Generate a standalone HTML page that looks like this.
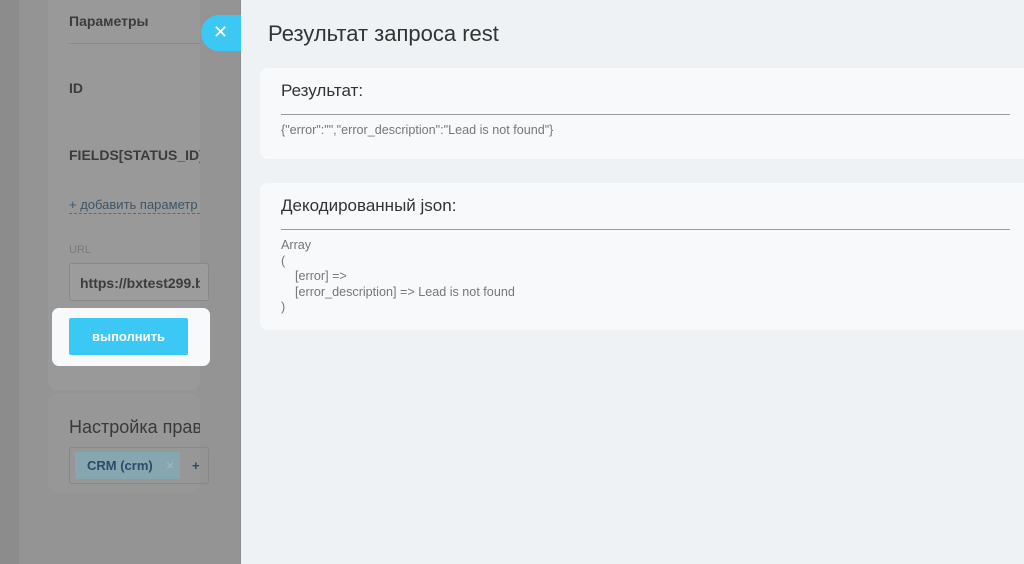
<!DOCTYPE html>
<html><head><meta charset="utf-8"><style>
*{margin:0;padding:0;box-sizing:border-box}
body{width:1024px;height:564px;overflow:hidden;position:relative;background:#8c8c8c;font-family:"Liberation Sans",sans-serif}
.l1{position:absolute;left:19px;top:0;width:221px;height:564px;background:#949494}
.card{position:absolute;left:48px;top:0;width:152px;height:390px;background:#999;border-radius:0 0 8px 8px}
.card2{position:absolute;left:48px;top:393px;width:152px;height:100px;background:#979797;border-radius:10px}
.t{position:absolute;color:#3c3c3c;font-weight:bold;font-size:14px;white-space:nowrap;overflow:hidden}
.right{position:absolute;left:241px;top:0;width:783px;height:564px;background:#eef2f5}
.box{position:absolute;left:19px;width:770px;background:#f8f9fb;border-radius:8px}
.h{position:absolute;left:21px;font-size:17px;color:#333}
.hr{position:absolute;left:21px;right:20px;height:1px;background:#9a9a9a}
.m{position:absolute;left:21px;font-size:12.6px;color:#777;line-height:15.5px}
</style></head><body>
<div class="l1"></div>
<div class="card"></div>
<div class="card2"></div>
<div class="t" style="left:69px;top:13px">Параметры</div>
<div style="position:absolute;left:69px;top:43px;width:131px;height:1px;background:#8a8a8a"></div>
<div class="t" style="left:69px;top:80px">ID</div>
<div class="t" style="left:69px;top:147px;width:131px">FIELDS[STATUS_ID]</div>
<div style="position:absolute;left:69px;top:197px;width:131px;overflow:hidden;white-space:nowrap;font-size:13px;color:#3f5566;border-bottom:1px dashed #5a6a77;height:17px">+ добавить параметр</div>
<div style="position:absolute;left:69px;top:244px;font-size:11px;color:#7a7a7a">URL</div>
<div style="position:absolute;left:69px;top:263px;width:140px;height:38px;border:1px solid #888;border-radius:3px;background:#9c9c9c"></div>
<div class="t" style="left:80px;top:275px;width:120px">https://bxtest299.bitrix24.ru</div>
<div style="position:absolute;left:52px;top:308px;width:158px;height:58px;background:#f8f9fb;border-radius:7px"></div>
<div style="position:absolute;left:69px;top:318px;width:119px;height:37px;background:#3bc8f5;border-radius:2px;color:#fff;font-weight:bold;font-size:13px;text-align:center;line-height:37px">выполнить</div>
<div style="position:absolute;left:69px;top:417px;font-size:18px;color:#3a3a3a;white-space:nowrap;width:131px;overflow:hidden">Настройка прав</div>
<div style="position:absolute;left:69px;top:447px;width:140px;height:37px;border:1px solid #888;border-radius:3px"></div>
<div style="position:absolute;left:75px;top:452px;width:105px;height:27px;background:#86a6b0;border-radius:2px;font-weight:bold;font-size:13px;color:#2d4a66;line-height:27px;padding-left:12px">CRM (crm) <span style="color:#9fb4bb;margin-left:10px">×</span></div>
<div style="position:absolute;left:192px;top:458px;color:#2d4a66;font-size:13px;font-weight:bold">+</div>
<div style="position:absolute;left:201px;top:15px;width:45px;height:36px;background:#3bc8f5;border-radius:18px 0 0 18px;color:#fff;font-size:18px;line-height:35px;padding-left:12px">✕</div>
<div class="right">
<div style="position:absolute;left:27px;top:21px;font-size:22px;color:#333">Результат запроса rest</div>
<div class="box" style="top:68px;height:91px">
<div class="h" style="top:13px">Результат:</div>
<div class="hr" style="top:46px"></div>
<div class="m" style="top:55px">{"error":"","error_description":"Lead is not found"}</div>
</div>
<div class="box" style="top:183px;height:147px">
<div class="h" style="top:13px">Декодированный json:</div>
<div class="hr" style="top:46px"></div>
<div class="m" style="top:55px">Array<br>(<br>&nbsp;&nbsp;&nbsp;&nbsp;[error] =&gt;<br>&nbsp;&nbsp;&nbsp;&nbsp;[error_description] =&gt; Lead is not found<br>)</div>
</div>
</div>
</body></html>
